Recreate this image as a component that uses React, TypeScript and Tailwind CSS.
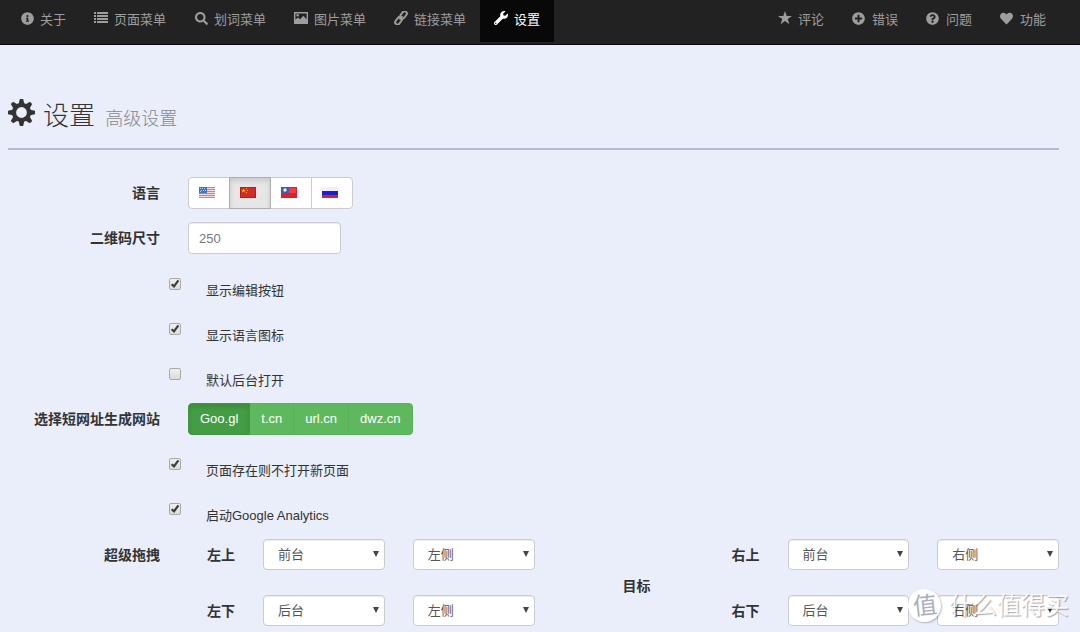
import { useState, type ReactNode } from "react";
import { FaHeart, FaInfoCircle, FaPlusCircle, FaQuestionCircle, FaSearch, FaWrench } from "react-icons/fa";

// ── Icons ─────────────────────────────────────────────────────────────────────
function ListIcon() {
  return (
    <svg className="w-[14px] h-[14px]" viewBox="0 0 14 14" fill="currentColor">
      <path d="M0 1h2v2H0zM3 1h11v2H3zM0 4h2v2H0zM3 4h11v2H3zM0 7h2v2H0zM3 7h11v2H3zM0 10h2v2H0zM3 10h11v2H3z" />
    </svg>
  );
}

function PictureIcon() {
  return (
    <svg className="w-[14px] h-[14px]" viewBox="0 0 14 14" fill="currentColor">
      <path
        fillRule="evenodd"
        d="M0 1h14v12H0zM1.400 2.400v6.200l2.600-2.200 2.200 1.800 3-3.400 3.400 3.400v-5.800zM3.600 2.900a1.300 1.300 0 1 1 0 2.600 1.300 1.300 0 0 1 0-2.600z"
      />
    </svg>
  );
}

function LinkIcon() {
  return (
    <svg className="w-[14px] h-[14px]" viewBox="0 0 14 14" fill="none" stroke="currentColor" strokeWidth="1.900">
      <rect x="5.500" y="1.600" width="8" height="4.600" rx="2.300" transform="rotate(-52 9.500 3.900)" />
      <rect x="0.500" y="7.600" width="8" height="4.600" rx="2.300" transform="rotate(-52 4.500 9.900)" />
      <path d="M5.600 8.700l2.800-3.500" />
    </svg>
  );
}

function StarIcon() {
  return (
    <svg className="w-[14px] h-[14px]" viewBox="0 0 14 14" fill="currentColor">
      <path d="M7 0l1.700 5H14L9.700 8.100l1.700 5.200L7 10.100l-4.400 3.200 1.700-5.200L0 5h5.300z" />
    </svg>
  );
}

function GearIcon() {
  return (
    <svg className="w-[27px] h-[27px]" viewBox="0 0 28 28" fill="currentColor">
      {[0, 45, 90, 135].map((deg) => (
        <path key={deg} transform={`rotate(${deg} 14 14)`} d="M12.300 0h3.400l1.500 6h-6.400zM10.800 22h6.400l-1.500 6h-3.400z" />
      ))}
      <path
        fillRule="evenodd"
        d="M14 4a10 10 0 1 1 0 20 10 10 0 0 1 0-20zM14 8.400a5.600 5.600 0 1 0 0 11.200 5.600 5.600 0 0 0 0-11.200z"
      />
    </svg>
  );
}

// ── Flags ─────────────────────────────────────────────────────────────────────
function FlagUs() {
  return (
    <svg className="w-4 h-[11px]" viewBox="0 0 16 11">
      <path fill="#f4dcda" d="M0 0h16v11H0z" />
      <path fill="#dd7b74" d="M0 0h16v1H0zM0 2h16v1H0zM0 4h16v1H0zM0 6h16v1H0zM0 8h16v1H0zM0 10h16v1H0z" />
      <path fill="#3f74c8" d="M0 0h8v6H0z" />
      <path fill="#b9cdf0" d="M1 1h1v1H1zM3 1h1v1H3zM5 1h1v1H5zM2 3h1v1H2zM4 3h1v1H4zM6 3h1v1H6zM1 4h1v1H1z" />
    </svg>
  );
}

function FlagCn() {
  return (
    <svg className="w-4 h-[11px]" viewBox="0 0 16 11">
      <path fill="#b81c1c" d="M0 0h16v11H0z" />
      <path fill="#d62a26" d="M1 1h14v9H1z" />
      <path fill="#f3b229" d="M3.500 1.500l.7 1.500h1.600L4.500 4l.5 1.600-1.500-1-1.500 1L2.500 4 1.200 3h1.600zM6 1h1v1H6zM7 3h1v1H7zM6 5h1v1H6z" />
    </svg>
  );
}

function FlagTw() {
  return (
    <svg className="w-4 h-[11px]" viewBox="0 0 16 11">
      <path fill="#e01f2b" d="M0 0h16v11H0z" />
      <path fill="#f43a43" d="M1 1h14v5H1z" />
      <path fill="#3a5fb0" d="M0 0h8v6H0z" />
      <circle cx="4" cy="3" r="1.700" fill="#eef3ff" />
    </svg>
  );
}

function FlagRu() {
  return (
    <svg className="w-4 h-[11px]" viewBox="0 0 16 11">
      <path fill="#f1f1f1" d="M0 0h16v4H0z" />
      <path fill="#1b1bd8" d="M0 4h16v4H0z" />
      <path fill="#dc1f1f" d="M0 8h16v3H0z" />
    </svg>
  );
}

// ── Data ──────────────────────────────────────────────────────────────────────
const NAV_LEFT = [
  { label: "关于", icon: <FaInfoCircle size={13} /> },
  { label: "页面菜单", icon: <ListIcon /> },
  { label: "划词菜单", icon: <FaSearch size={13} /> },
  { label: "图片菜单", icon: <PictureIcon /> },
  { label: "链接菜单", icon: <LinkIcon /> },
  { label: "设置", icon: <FaWrench size={14} />, active: true },
];

const NAV_RIGHT = [
  { label: "评论", icon: <StarIcon /> },
  { label: "错误", icon: <FaPlusCircle size={13} /> },
  { label: "问题", icon: <FaQuestionCircle size={13} /> },
  { label: "功能", icon: <FaHeart size={13} /> },
];

const LANGS = [
  { id: "en", name: "English", flag: <FlagUs /> },
  { id: "zh-CN", name: "简体中文", flag: <FlagCn /> },
  { id: "zh-TW", name: "繁體中文", flag: <FlagTw /> },
  { id: "ru", name: "Русский", flag: <FlagRu /> },
];

const SHORTENERS = ["Goo.gl", "t.cn", "url.cn", "dwz.cn"];

// ── Nav item ──────────────────────────────────────────────────────────────────
function NavItem({ label, icon, active }: { label: string; icon: ReactNode; active?: boolean }) {
  return (
    <li>
      <a
        href="#"
        className={`flex items-start gap-[6px] h-[42px] px-[14px] leading-5 ${
          active ? "bg-[#080808] text-white" : "text-[#9d9d9d] hover:text-white"
        }`}
      >
        <span className="flex w-[14px] h-5 mt-2 items-center justify-center">{icon}</span>
        <span className="mt-[10px]">{label}</span>
      </a>
    </li>
  );
}

// ── Form pieces ───────────────────────────────────────────────────────────────
function Row({ label, htmlFor, children }: { label: string; htmlFor?: string; children: ReactNode }) {
  return (
    <div className="flex items-center gap-7 h-8">
      <label htmlFor={htmlFor} className="w-[152px] shrink-0 text-right text-sm font-bold">
        {label}
      </label>
      {children}
    </div>
  );
}

function CheckRow({ label, defaultChecked }: { label: string; defaultChecked?: boolean }) {
  return (
    <div className="h-8 pl-[161px]">
      <label className="inline-flex items-start">
        <span className="relative mt-[10px] flex">
          <input
            type="checkbox"
            defaultChecked={defaultChecked}
            className="peer appearance-none w-3 h-3 rounded-[2px] border border-[#a9a9a9] bg-linear-to-b from-[#f0f0f0] to-[#dcdcdc]"
          />
          <svg
            className="absolute inset-0 hidden w-3 h-3 pointer-events-none peer-checked:block"
            viewBox="0 0 12 12"
            fill="none"
            stroke="#3c3c3c"
            strokeWidth="2.200"
          >
            <path d="M2.600 6.200L5 8.400l4.400-6" />
          </svg>
        </span>
        <span className="ml-[25px] mt-[13px] leading-5">{label}</span>
      </label>
    </div>
  );
}

function Select({ name, value, options }: { name: string; value: string; options: string[] }) {
  return (
    <div className="relative flex-1">
      <select
        aria-label={name}
        defaultValue={value}
        className="block appearance-none w-full h-[31px] pl-[14px] pr-5 rounded-[4px] border border-[#ccc] bg-white text-[#555] shadow-[inset_0_1px_1px_rgba(0,0,0,0.075)]"
      >
        {options.map((o) => (
          <option key={o}>{o}</option>
        ))}
      </select>
      <svg className="absolute right-[6px] top-3 w-[6px] h-[6px] pointer-events-none" viewBox="0 0 6 6" fill="#444">
        <path d="M0 0h6L3 6z" />
      </svg>
    </div>
  );
}

function DragLine({ label, open, side }: { label: string; open: string; side: string }) {
  return (
    <div role="group" aria-label={label} className="flex items-center gap-7">
      <span className="w-[47px] shrink-0 text-right text-sm font-bold">{label}</span>
      <Select name={`${label} 打开方式`} value={open} options={["前台", "后台"]} />
      <Select name={`${label} 位置`} value={side} options={["左侧", "右侧"]} />
    </div>
  );
}

// ── Page ──────────────────────────────────────────────────────────────────────
export default function App() {
  const [lang, setLang] = useState("zh-CN");
  const [shortener, setShortener] = useState("Goo.gl");

  return (
    <div className="relative min-h-screen bg-[#e9eefa] text-[13px] text-[#333] font-['Liberation_Sans','Noto_Sans_CJK_SC',sans-serif]">
      <nav className="flex justify-between h-[45px] pl-[6px] pr-5 bg-[#222] border-b border-[#080808]">
        <ul className="flex">
          {NAV_LEFT.map((item) => (
            <NavItem key={item.label} {...item} />
          ))}
        </ul>
        <ul className="flex">
          {NAV_RIGHT.map((item) => (
            <NavItem key={item.label} {...item} />
          ))}
        </ul>
      </nav>

      <main className="pl-2 pr-[21px] pt-[50px]">
        <header className="flex items-start h-[55px] pt-1 border-b-2 border-[#b3bbd2]">
          <GearIcon />
          <h1 className="ml-2 mt-px text-[26px] leading-8 font-light">
            设置 <small className="ml-[3px] text-[18px] text-[#888]">高级设置</small>
          </h1>
        </header>

        <form onSubmit={(e) => e.preventDefault()}>
          <div className="flex flex-col gap-[13px] pt-[27px]">
            <Row label="语言">
              <div className="flex">
                {LANGS.map((l) => (
                  <button
                    key={l.id}
                    type="button"
                    aria-label={l.name}
                    aria-pressed={lang === l.id}
                    onClick={() => setLang(l.id)}
                    className={`flex items-center justify-center w-[42px] h-8 -ml-px pr-1 pb-[2px] border first:ml-0 first:rounded-l-[4px] last:rounded-r-[4px] ${
                      lang === l.id
                        ? "relative border-[#adadad] bg-[#e6e6e6] shadow-[inset_0_3px_5px_rgba(0,0,0,0.125)]"
                        : "border-[#ccc] bg-white"
                    }`}
                  >
                    {l.flag}
                  </button>
                ))}
              </div>
            </Row>

            <Row label="二维码尺寸" htmlFor="qr-size">
              <input
                id="qr-size"
                type="text"
                defaultValue="250"
                className="w-[153px] h-8 px-[10px] rounded-[4px] border border-[#ccc] bg-white text-[#777] shadow-[inset_0_1px_1px_rgba(0,0,0,0.075)]"
              />
            </Row>
          </div>

          <div className="flex flex-col gap-[13px] pt-[14px]">
            <CheckRow label="显示编辑按钮" defaultChecked />
            <CheckRow label="显示语言图标" defaultChecked />
            <CheckRow label="默认后台打开" />

            <Row label="选择短网址生成网站">
              <div className="flex">
                {SHORTENERS.map((s) => (
                  <button
                    key={s}
                    type="button"
                    aria-pressed={shortener === s}
                    onClick={() => setShortener(s)}
                    className={`h-8 -ml-px px-[11px] border text-white first:ml-0 first:rounded-l-[4px] last:rounded-r-[4px] ${
                      shortener === s
                        ? "relative border-[#419641] bg-[#449d44] shadow-[inset_0_3px_5px_rgba(0,0,0,0.125)]"
                        : "border-[#57b357] bg-[#5eb95e]"
                    }`}
                  >
                    {s}
                  </button>
                ))}
              </div>
            </Row>

            <CheckRow label="页面存在则不打开新页面" defaultChecked />
            <CheckRow label="启动Google Analytics" defaultChecked />
          </div>

          {/* Drag gestures: one select pair per screen corner */}
          <div className="flex items-start pt-[14px]">
            <span className="w-[152px] mr-7 shrink-0 text-right text-sm leading-8 font-bold">超级拖拽</span>
            <div className="flex flex-1 flex-col gap-[25px]">
              <DragLine label="左上" open="前台" side="左侧" />
              <DragLine label="左下" open="后台" side="左侧" />
            </div>
            <span className="w-[178px] pr-[62px] pt-[31px] shrink-0 text-right text-sm leading-8 font-bold">目标</span>
            <div className="flex flex-1 flex-col gap-[25px]">
              <DragLine label="右上" open="前台" side="右侧" />
              <DragLine label="右下" open="后台" side="右侧" />
            </div>
          </div>
        </form>
      </main>

      {/* Watermark */}
      <div className="absolute right-[11px] bottom-[10px] flex items-center gap-2 pointer-events-none">
        <span className="flex w-[33px] h-[33px] items-center justify-center rounded-full bg-white text-[24px] text-[#a9afc0] shadow-[1px_1px_2px_rgba(0,0,0,0.25)]">
          <span className="-rotate-6">值</span>
        </span>
        <span className="text-[24px] leading-8 text-white/90 [text-shadow:1px_1px_1px_rgba(0,0,0,0.35)]">什么值得买</span>
      </div>
    </div>
  );
}
